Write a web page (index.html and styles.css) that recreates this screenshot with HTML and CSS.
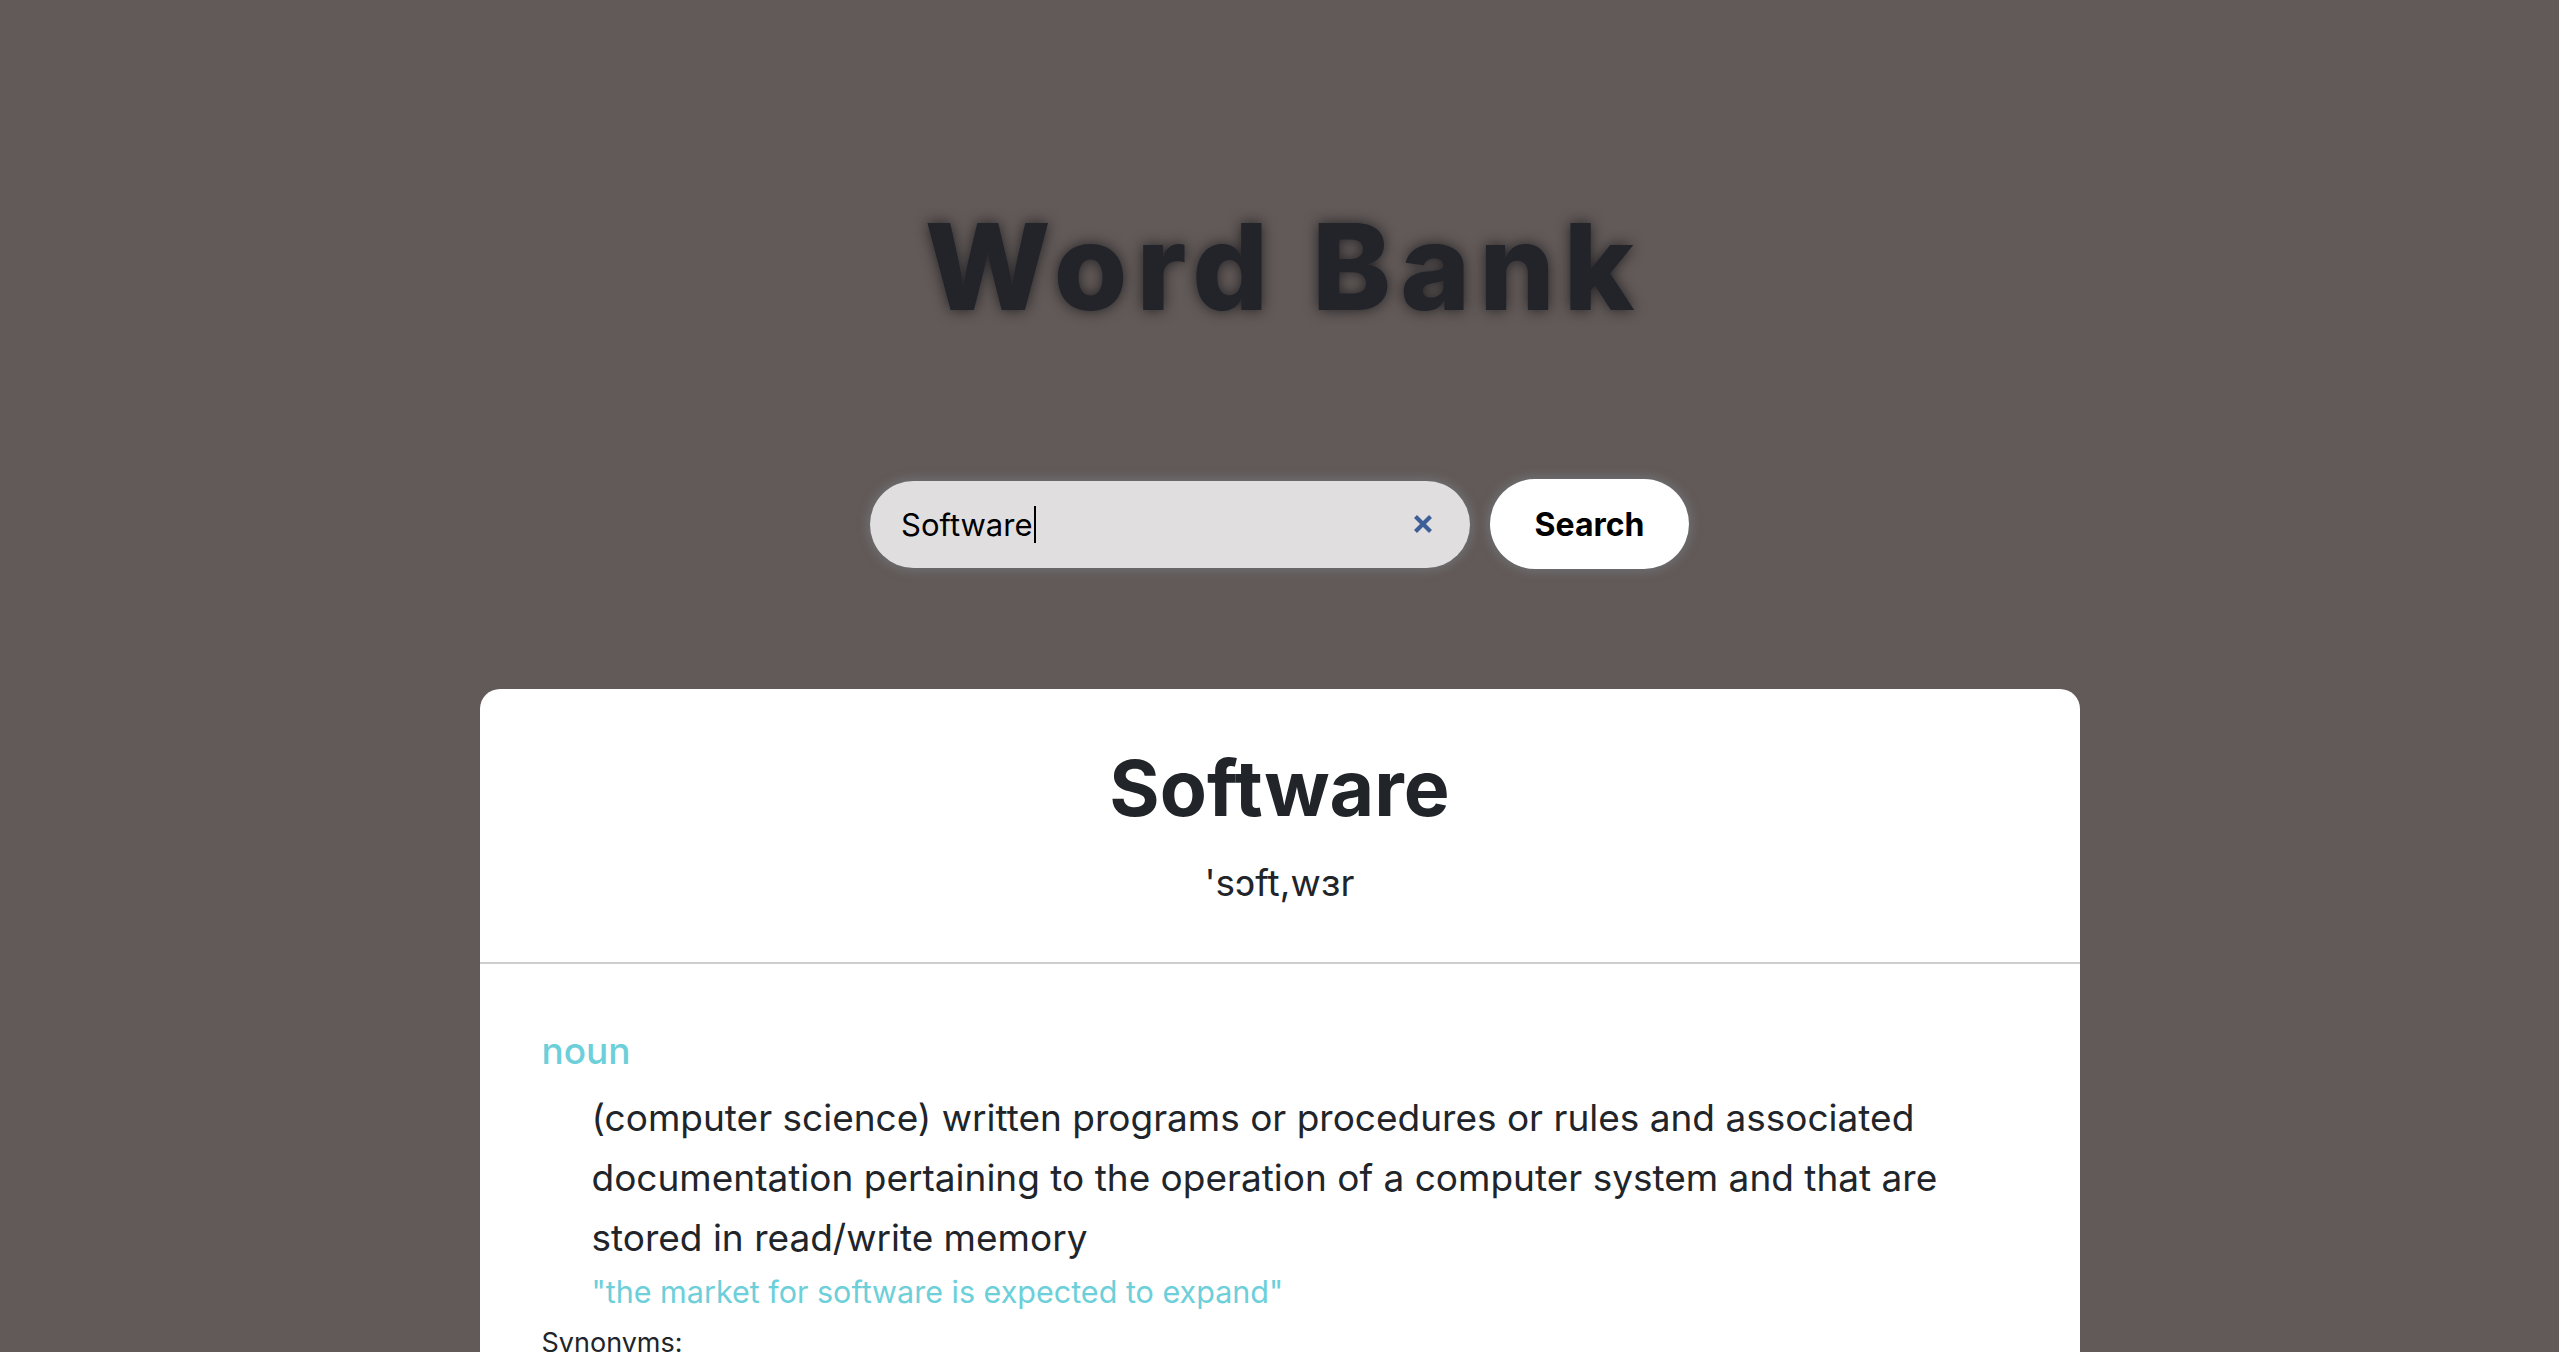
FILE: index.html
```html
<!DOCTYPE html>
<html lang="en">
<head>
<meta charset="utf-8">
<title>Word Bank</title>
<link rel="stylesheet" href="styles.css">
</head>
<body>
<main class="page">
  <h1 class="brand">Word Bank</h1>
  <form class="search-row" onsubmit="return false">
    <div class="search-box" role="searchbox">
      <span class="search-text">Software</span><span class="caret"></span>
      <button type="button" class="clear-btn" aria-label="Clear">
        <svg viewBox="0 0 20 20" width="20" height="20"><path d="M2.5 2.5 L17.5 17.5 M17.5 2.5 L2.5 17.5" stroke="#3d5f97" stroke-width="4.2" stroke-linecap="butt" fill="none"/></svg>
      </button>
    </div>
    <button type="submit" class="search-btn">Search</button>
  </form>
  <section class="card">
    <header class="card-head">
      <h2 class="word">Software</h2>
      <p class="phonetic">'sɔft,wɜr</p>
    </header>
    <div class="card-body">
      <h3 class="pos">noun</h3>
      <p class="definition">(computer science) written programs or procedures or rules and associated documentation pertaining to the operation of a computer system and that are stored in read/write memory</p>
      <p class="example">"the market for software is expected to expand"</p>
      <p class="synonyms">Synonyms:</p>
    </div>
  </section>
</main>
</body>
</html>
```
FILE: styles.css
```css
html, body {
  margin: 0;
  padding: 0;
}
body {
  background: #625a58;
  font-family: "Inter", "Liberation Sans", sans-serif;
  color: #212529;
  overflow: hidden;
  height: 1352px;
}
.page {
  display: flex;
  flex-direction: column;
  align-items: center;
}
.brand {
  margin: 196px 0 0 0;
  font-family: "Inter", sans-serif;
  font-weight: 800;
  font-size: 119px;
  line-height: 142px;
  letter-spacing: 9px;
  padding-left: 9px;
  color: #22242a;
  text-shadow: 0 0 14px rgba(15, 15, 20, 0.75);
}
.search-row {
  margin-top: 141px;
  display: flex;
  align-items: center;
  gap: 20px;
}
.search-box {
  width: 600px;
  height: 87px;
  box-sizing: border-box;
  background: #e0dedf;
  border-radius: 44px;
  display: flex;
  align-items: center;
  padding: 0 36px 0 31px;
  box-shadow: 0 0 10px 3px rgba(120, 125, 135, 0.55);
}
.search-text {
  font-size: 31px;
  color: #000;
}
.caret {
  width: 2px;
  height: 37px;
  background: #000;
  margin-left: 1px;
}
.clear-btn {
  margin-left: auto;
  border: 0;
  background: transparent;
  padding: 0;
  width: 22px;
  height: 22px;
  display: flex;
  align-items: center;
  justify-content: center;
}
.search-btn {
  width: 199px;
  height: 90px;
  border: 0;
  border-radius: 45px;
  background: #fff;
  font-family: "Inter", sans-serif;
  font-weight: 700;
  font-size: 32px;
  color: #000;
  box-shadow: 0 0 10px 3px rgba(120, 125, 135, 0.55);
}
.card {
  margin-top: 120px;
  width: 1600px;
  background: #fff;
  border-radius: 20px 20px 0 0;
  min-height: 700px;
}
.card-head {
  padding: 53px 0 51px;
  border-bottom: 2px solid #cdcdcd;
  text-align: center;
}
.word {
  margin: 0;
  font-size: 77px;
  font-weight: 700;
  line-height: 1.2;
  color: #212529;
}
.phonetic {
  margin: 21px 0 0;
  font-size: 37px;
  line-height: 1.5;
  color: #212529;
}
.card-body {
  padding: 65px 62px 0;
}
.pos {
  margin: 0;
  font-size: 37px;
  font-weight: 500;
  line-height: 1.2;
  color: #6ccfd9;
}
.definition {
  margin: 15px 0 0 50px;
  font-size: 37px;
  line-height: 60px;
  color: #212529;
}
.example {
  margin: 4px 0 0 50px;
  font-size: 30.5px;
  line-height: 1.3;
  color: #6ccfd9;
}
.synonyms {
  margin: 15px 0 0;
  font-size: 27px;
  line-height: 1.2;
  color: #212529;
}
```
